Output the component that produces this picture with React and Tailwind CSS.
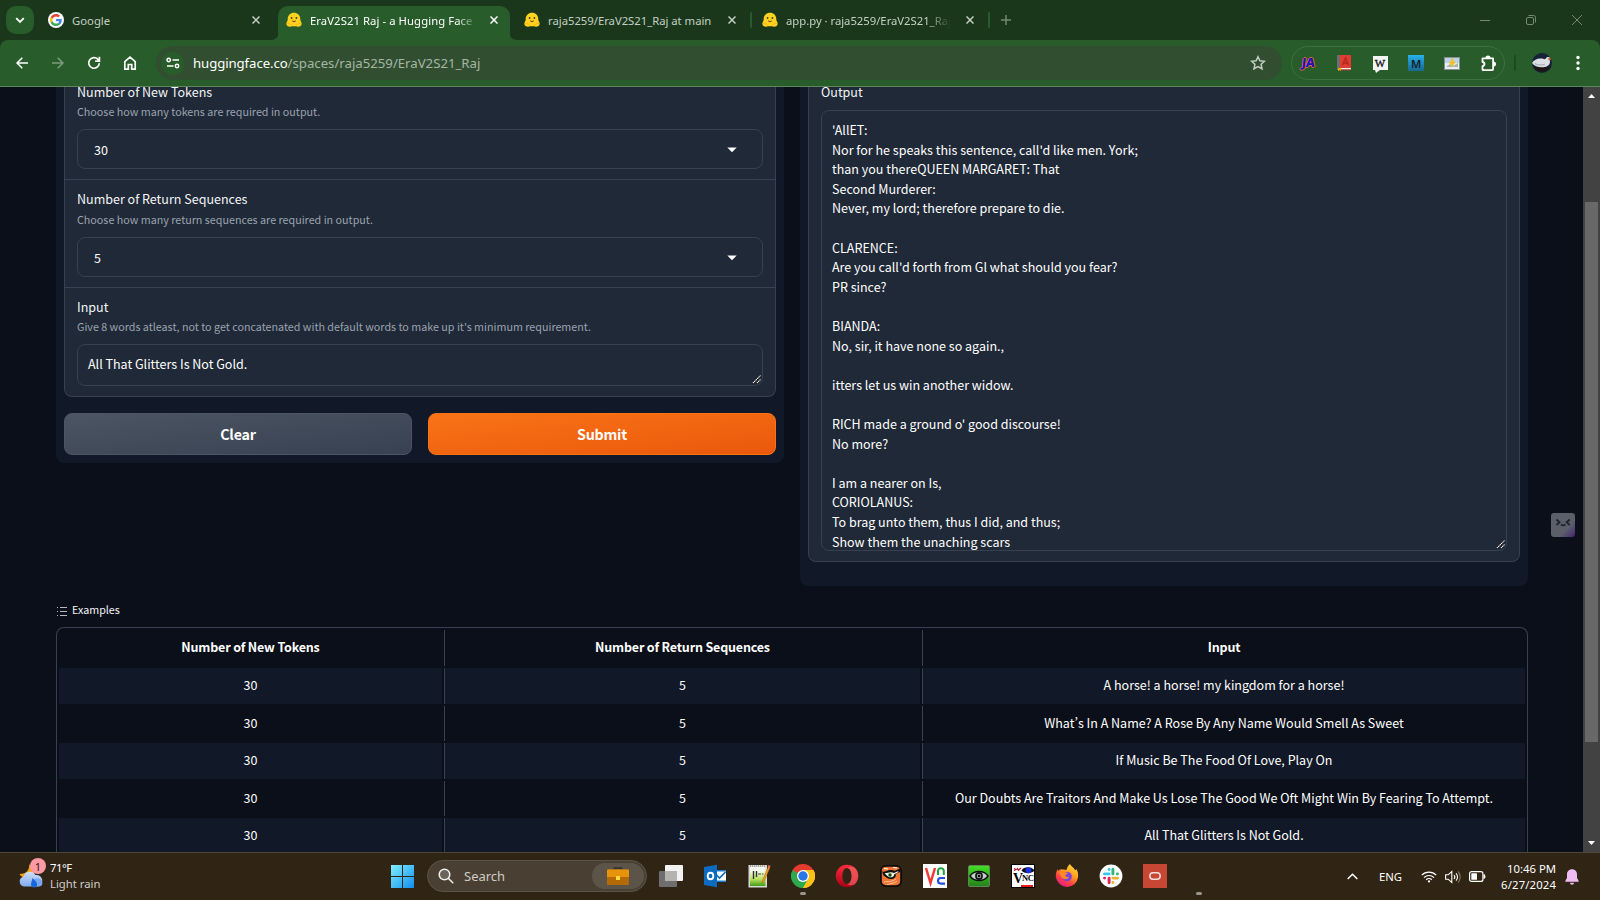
const OUTPUT = `'AllET:
Nor for he speaks this sentence, call'd like men. York;
than you thereQUEEN MARGARET: That
Second Murderer:
Never, my lord; therefore prepare to die.

CLARENCE:
Are you call'd forth from Gl what should you fear?
PR since?

BIANDA:
No, sir, it have none so again.,

itters let us win another widow.

RICH made a ground o' good discourse!
No more?

I am a nearer on Is,
CORIOLANUS:
To brag unto them, thus I did, and thus;
Show them the unaching scars`;

const EXAMPLES = [
  'A horse! a horse! my kingdom for a horse!',
  'What’s In A Name? A Rose By Any Name Would Smell As Sweet',
  'If Music Be The Food Of Love, Play On',
  'Our Doubts Are Traitors And Make Us Lose The Good We Oft Might Win By Fearing To Attempt.',
  'All That Glitters Is Not Gold.',
];

/* ---------- browser chrome ---------- */

function HuggingFace() {
  return (
    <svg width="16" height="16" viewBox="0 0 16 16" className="shrink-0">
      <path d="M8 .8c3.600 0 6.300 2.700 6.300 6.200 0 1.200.2 2 .9 3 .7 1 .7 3-.6 4-1.300 1-3.600 1-4.600.3H6c-1 .7-3.300.7-4.600-.3-1.300-1-1.300-3-.6-4 .7-1 .9-1.800.9-3C1.700 3.500 4.400.8 8 .8z" fill="#ffd21e" />
      <path d="M1 12c1.500-1 3.500-.6 4.600 1.600M15 12c-1.500-1-3.500-.6-4.600 1.600" stroke="#ffb01e" strokeWidth="1" fill="none" />
      <circle cx="5.600" cy="6" r=".9" fill="#3a3b45" />
      <circle cx="10.400" cy="6" r=".9" fill="#3a3b45" />
      <path d="M5.900 8.300c1.200.8 3 .8 4.200 0-.2 1.200-1 1.900-2.100 1.900s-1.900-.7-2.100-1.900z" fill="#7a4a2a" />
    </svg>
  );
}

function GoogleG() {
  return (
    <svg width="16" height="16" viewBox="0 0 48 48" className="shrink-0">
      <circle cx="24" cy="24" r="24" fill="#fff" />
      <g transform="translate(6 6) scale(.75)">
        <path fill="#EA4335" d="M24 9.500c3.540 0 6.710 1.220 9.210 3.600l6.850-6.850C35.900 2.380 30.470 0 24 0 14.620 0 6.510 5.380 2.560 13.220l7.980 6.190C12.430 13.720 17.740 9.500 24 9.500z" />
        <path fill="#4285F4" d="M46.980 24.550c0-1.570-.15-3.090-.38-4.550H24v9.020h12.940c-.58 2.960-2.260 5.480-4.780 7.180l7.730 6c4.510-4.180 7.090-10.360 7.090-17.650z" />
        <path fill="#FBBC05" d="M10.530 28.590c-.48-1.450-.76-2.990-.76-4.590s.27-3.140.76-4.590l-7.980-6.190C.92 16.460 0 20.120 0 24c0 3.880.92 7.540 2.560 10.780l7.970-6.190z" />
        <path fill="#34A853" d="M24 48c6.480 0 11.930-2.130 15.890-5.810l-7.730-6c-2.150 1.450-4.920 2.300-8.160 2.300-6.260 0-11.570-4.220-13.470-9.910l-7.980 6.190C6.510 42.620 14.620 48 24 48z" />
      </g>
    </svg>
  );
}

function TabClose({ active }) {
  return (
    <svg width="8" height="8" viewBox="0 0 8 8" className="shrink-0">
      <path d="M.5.5l7 7M7.500.5l-7 7" stroke={active ? '#fff' : '#c3cfc3'} strokeWidth="1.500" fill="none" />
    </svg>
  );
}

function TabStrip() {
  return (
    <div className="flex h-10 bg-[#1b371b] text-[11.3px] leading-[16px] text-[#c3cfc3]">
      <div className="mt-1.5 ml-1.5 flex size-7 shrink-0 items-center justify-center rounded-[10px] bg-[#285c2a]">
        <svg width="10" height="7" viewBox="0 0 10 7"><path d="M1.200 1.200L5 5l3.800-3.800" stroke="#fff" strokeWidth="1.800" fill="none" /></svg>
      </div>
      <div className="flex w-[237px] shrink-0 items-center pr-[11px] pl-[14px]">
        <GoogleG />
        <span className="ml-2 grow pt-[2px]">Google</span>
        <TabClose />
      </div>
      <svg width="8" height="40" viewBox="0 0 8 40" className="-mr-px shrink-0"><path d="M0 40a8 8 0 0 0 8-8v8z" fill="#285c2a" /></svg>
      <div className="mt-1.5 flex w-[232px] shrink-0 items-center rounded-t-[10px] bg-[#285c2a] pr-[12px] pb-1.5 pl-[8px] text-white">
        <HuggingFace />
        <div className="ml-2 w-[167px] shrink-0 overflow-hidden pt-[2px] whitespace-nowrap tracking-[0.07px] [mask-image:linear-gradient(to_right,black_88%,transparent)]">EraV2S21 Raj - a Hugging Face S</div>
        <div className="grow" />
        <TabClose active />
      </div>
      <svg width="8" height="40" viewBox="0 0 8 40" className="-ml-px shrink-0"><path d="M8 40a8 8 0 0 1-8-8v8z" fill="#285c2a" /></svg>
      <div className="flex w-[233px] shrink-0 items-center pl-[7px]">
        <HuggingFace />
        <span className="ml-2 w-[180px] pt-[2px] whitespace-nowrap tracking-[-0.02px]">raja5259/EraV2S21_Raj at main</span>
        <TabClose />
      </div>
      <div className="mt-3 h-4 w-[2px] shrink-0 rounded bg-[#285c2a]" />
      <div className="flex w-[236px] shrink-0 items-center pl-[10px]">
        <HuggingFace />
        <div className="mr-[15px] ml-2 w-[165px] shrink-0 overflow-hidden pt-[2px] whitespace-nowrap tracking-[-0.02px] [mask-image:linear-gradient(to_right,black_85%,transparent)]">app.py · raja5259/EraV2S21_Raj</div>
        <TabClose />
      </div>
      <div className="mt-3 h-4 w-[2px] shrink-0 rounded bg-[#285c2a]" />
      <svg width="10" height="10" viewBox="0 0 10 10" className="mt-[15px] ml-[11px] shrink-0"><path d="M5 0v10M0 5h10" stroke="#73896f" strokeWidth="1.500" /></svg>
      <div className="grow" />
      <div className="mr-[18px] flex items-center gap-[36px] text-[#748a74]">
        <svg width="10" height="10" viewBox="0 0 10 10"><path d="M0 5.500h10" stroke="currentColor" /></svg>
        <svg width="10" height="10" viewBox="0 0 10 10" fill="none" stroke="currentColor"><rect x=".5" y="2.500" width="7" height="7" rx="1.500" /><path d="M2.500.5h5a2 2 0 0 1 2 2v5" /></svg>
        <svg width="10" height="10" viewBox="0 0 10 10"><path d="M0 0l10 10M10 0L0 10" stroke="currentColor" /></svg>
      </div>
    </div>
  );
}

function Slot({ children, w = 'w-9' }) {
  return <div className={`flex shrink-0 items-center justify-center ${w}`}>{children}</div>;
}

function Toolbar() {
  return (
    <div className="bg-[#1b371b]">
      <div className="flex h-[47px] items-center rounded-t-lg border-b border-[#5b875d] bg-[#285c2a] pl-1 text-white">
        <Slot><svg width="12" height="12" viewBox="0 0 12 12" fill="none" stroke="currentColor" strokeWidth="1.600"><path d="M12 6H1.200M6.300.8L1.100 6l5.200 5.200" /></svg></Slot>
        <Slot><svg width="12" height="12" viewBox="0 0 12 12" fill="none" stroke="#7c9b7c" strokeWidth="1.600"><path d="M0 6h10.800M5.700.8L10.900 6l-5.200 5.200" /></svg></Slot>
        <Slot><svg width="14" height="14" viewBox="0 0 14 14" fill="none" stroke="currentColor" strokeWidth="1.700"><path d="M12.300 7.300A5.300 5.300 0 1 1 10.800 3.200L12 4.500" /><path d="M12.400.8v4.300H8.200" /></svg></Slot>
        <Slot><svg width="14" height="14" viewBox="0 0 14 14" fill="none" stroke="currentColor" strokeWidth="1.700"><path d="M1.800 5.600L7 1.200l5.200 4.400v7.500H8.700V8.500H5.300v4.600H1.800z" /></svg></Slot>
        <div className="ml-2 flex h-[34px] w-[1126px] items-center rounded-full bg-[#314e31] pr-[16px] pl-[5px]">
          <div className="flex size-[23px] items-center justify-center rounded-full bg-[#285c2a]">
            <svg width="14" height="12" viewBox="0 0 14 12" fill="none" stroke="currentColor" strokeWidth="1.500"><circle cx="2.700" cy="3" r="1.700" /><path d="M6.500 3H13M1 9h6.500" /><circle cx="11" cy="9" r="1.700" /></svg>
          </div>
          <div className="ml-[9px] grow whitespace-nowrap text-[13.2px] leading-5 text-[#a6b5a4]"><span className="tracking-[-0.08px] text-white">huggingface.co</span><span>/spaces/raja5259/EraV2S21_Raj</span></div>
          <svg width="16" height="16" viewBox="0 0 16 16" fill="none" stroke="#c4cfc2" strokeWidth="1.500"><path d="M8 1.800l1.900 4 4.500.5-3.300 3 .9 4.400L8 11.500l-4 2.200.9-4.400-3.300-3 4.500-.5z" /></svg>
        </div>
        <div className="ml-[9px] flex h-[34px] w-[214px] items-center rounded-full border border-[#3f703f]">
          <Slot w="w-[34px]"><span className="mr-[2px] -skew-x-6 font-['Noto_Sans'] text-[12.5px] font-extrabold tracking-[-0.5px] text-[#1a12c8] [text-shadow:1px_0_#d8642e,-1px_0_#d8642e,0_1px_#d8642e,0_-1px_#d8642e]">JA</span></Slot>
          <Slot>
            <svg width="14" height="16" viewBox="0 0 14 16"><path d="M0 0h3v15H0z" fill="#6e6e6e" /><path d="M3 0h11v13H3z" fill="#e03c31" /><path d="M3 13h11v1.500H3z" fill="#eee" /><path d="M3 14.500h11v.8H3z" fill="#d33" /><path d="M1 13h3v3l-1.500-1L1 16z" fill="#f2a900" /><path d="M5.500 10L8.500 3l3 7M6.500 8h4" stroke="#b32820" strokeWidth="1.400" fill="none" /></svg>
          </Slot>
          <Slot>
            <div className="relative flex h-[14px] w-[15px] items-center justify-center bg-[#f4f4f4] font-['Liberation_Serif'] text-[11px] leading-none text-[#111] [-webkit-text-stroke:0.3px_#111]">W
              <svg width="5" height="3" viewBox="0 0 5 3" className="absolute top-[14px] left-[2px]"><path d="M0 0h5L1 3z" fill="#f4f4f4" /></svg>
            </div>
          </Slot>
          <Slot><div className="flex size-4 items-center justify-center bg-linear-to-b from-[#29b1ec] to-[#17688f] text-[11px] leading-none font-semibold text-[#10202c]">M</div></Slot>
          <Slot>
            <svg width="16" height="13" viewBox="0 0 16 13"><rect width="16" height="13" fill="#8b8f92" /><rect x="1" y="1" width="14" height="11" fill="#e9eef2" /><path d="M1 1h14v5H1z" fill="#b8d4ec" /><path d="M2 10l4-3 3 2 5-3v4z" fill="#a8b6a0" /><path d="M7 1.500h2.500v3.300H12L8.200 9.800 4.500 4.800H7z" fill="#f7bf26" /></svg>
          </Slot>
          <Slot>
            <svg width="17" height="17" viewBox="0 0 17 17" fill="none" stroke="#fff" strokeWidth="1.800" strokeLinejoin="round"><path d="M2.500 3.400h10.600v10.900c0 .6-.3.900-.8.900H3.300c-.5 0-.8-.3-.8-.8v-3.200c2.600-.3 2.600-3.900 0-4.200z" /><path d="M6.300 3.100a1.700 1.700 0 0 1 3.400 0M13.300 7.400a1.700 1.700 0 0 1 0 3.600" fill="#fff" /></svg>
          </Slot>
        </div>
        <div className="ml-[9px] h-4 w-[2px] rounded bg-[#1b4a1e]" />
        <svg width="20" height="20" viewBox="0 0 20 20" className="ml-[16px]">
          <circle cx="10" cy="10" r="10" fill="#152238" />
          <path d="M1.500 14h17a10 10 0 0 1-17 0z" fill="#1c1714" />
          <path d="M0 10c2-3.500 6-5 9-4.500 2 0 3 1 4.500.5 1-2 3-2.500 4.500-1.200.5.8-.3 1-.3 2.200 1 3-.7 6.500-5 7C8 15 3 14 0 10z" fill="#dcdfe4" />
          <path d="M3 10.500c3 2 7 2 10 .5" stroke="#9fa5b0" fill="none" />
          <circle cx="17.500" cy="6" r="1.300" fill="#d9622b" />
        </svg>
        <svg width="4" height="16" viewBox="0 0 4 16" className="ml-[24px]" fill="#fff"><circle cx="2" cy="2.500" r="1.700" /><circle cx="2" cy="8" r="1.700" /><circle cx="2" cy="13.500" r="1.700" /></svg>
      </div>
    </div>
  );
}

/* ---------- page ---------- */

function Grip() {
  return (
    <svg width="9" height="9" viewBox="0 0 9 9" className="absolute right-[1px] bottom-[1px]">
      <path d="M.5 8.500l8-8M4.500 8.500l4-4" stroke="#000" strokeWidth="1.800" />
      <path d="M.8 8.200l7.700-7.700M4.800 8.200l3.700-3.700" stroke="#fff" strokeWidth="1.100" strokeDasharray="1.600 .4" />
    </svg>
  );
}

function Label({ children }) {
  return <div className="h-5 text-[12.52px] leading-5 text-[#f3f4f6]">{children}</div>;
}

function Info({ children }) {
  return <div className="h-[18px] text-[10.74px] leading-[18px] whitespace-nowrap text-[#9ca3af]">{children}</div>;
}

function Select({ value }) {
  return (
    <div className="mt-2 flex h-10 items-center justify-between rounded-lg border border-[#374151] pt-px pr-[25px] pl-4 text-[12.52px] leading-5 text-white">
      <span>{value}</span>
      <svg width="10" height="6" viewBox="0 0 10 6"><path d="M.3.500h9.400L5 5.300z" fill="#fff" /></svg>
    </div>
  );
}

function InputPanel() {
  return (
    <section className="h-[376px] w-[728px] rounded-b-lg bg-[#111827] px-2">
      <div className="flow-root h-[310px] rounded-b-lg border border-t-0 border-[#374151] bg-[#1f2937]">
        <div className="flow-root h-[93px] border-b border-[#374151] px-3">
          <div className="-mt-[5px] mb-px"><Label>Number of New Tokens</Label></div>
          <Info>Choose how many tokens are required in output.</Info>
          <Select value="30" />
        </div>
        <div className="h-[108px] border-b border-[#374151] px-3 pt-[9px]">
          <div className="mb-[2px]"><Label>Number of Return Sequences</Label></div>
          <Info>Choose how many return sequences are required in output.</Info>
          <Select value="5" />
        </div>
        <div className="px-3 pt-[9px]">
          <div className="mb-px"><Label>Input</Label></div>
          <Info>Give 8 words atleast, not to get concatenated with default words to make up it's minimum requirement.</Info>
          <div className="relative mt-2 h-[42px] rounded-lg border border-[#374151] px-[10px] pt-[9px] text-[12.52px] leading-[20px] text-white">
            All That Glitters Is Not Gold.
            <Grip />
          </div>
        </div>
      </div>
      <div className="mt-4 grid h-[42px] grid-cols-2 gap-4 text-center text-[14.3px] leading-[40px] font-bold tracking-[-0.2px] text-white">
        <button className="rounded-lg border border-[#4b5563] bg-linear-to-br from-[#4b5563] to-[#374151]">Clear</button>
        <button className="rounded-lg border border-[#f97316] bg-linear-to-br from-[#f97316] to-[#ea580c]">Submit</button>
      </div>
    </section>
  );
}

function OutputPanel() {
  return (
    <section className="h-[499px] w-[728px] rounded-b-lg bg-[#111827] px-2">
      <div className="flow-root h-[475px] rounded-b-lg border border-t-0 border-[#374151] bg-[#1f2937] px-3">
        <div className="-mt-[5px]"><Label>Output</Label></div>
        <div className="relative mt-[8px] h-[441px] overflow-hidden rounded-lg border border-[#374151] px-[10px] pt-[9.1px] text-[12.52px] leading-[19.6px] whitespace-pre text-white">
          {OUTPUT}
          <Grip />
        </div>
      </div>
    </section>
  );
}

function Examples() {
  return (
    <section className="ml-14 w-[1472px] [font-feature-settings:'pwid']">
      <div className="mt-[14px] flex h-5 items-center text-[10.72px] leading-5 text-[#f3f4f6]">
        <svg width="10" height="9" viewBox="0 0 10 9" className="mx-px mr-[5px] mt-[2px]" fill="#b4b8bf"><path d="M0 0h1v1H0zM3 0h7v1H3zM0 4h1v1H0zM3 4h7v1H3zM0 8h1v1H0zM3 8h7v1H3z" /></svg>
        Examples
      </div>
      <div className="mt-[7px] rounded-t-lg border border-b-0 border-[#374151] px-[2px] pt-[2px] text-center text-[12.52px] text-white">
        <div className="grid h-9 grid-cols-[383px_476px_1fr] gap-[2px] leading-[34px] font-bold tracking-[-0.18px]">
          <div>Number of New Tokens</div>
          <div className="border-l border-[#374151]">Number of Return Sequences</div>
          <div className="border-l border-[#374151]">Input</div>
        </div>
        {EXAMPLES.map((text, i) => (
          <div key={text} className={`mt-[2px] mb-[1.6px] grid h-[35.600px] grid-cols-[383px_476px_1fr] gap-[2px] leading-[34px] ${i % 2 ? '' : '[&>div]:bg-[#111827]'}`}>
            <div>30</div>
            <div className="border-l border-[#374151]">5</div>
            <div className="border-l border-[#374151]">{text}</div>
          </div>
        ))}
      </div>
    </section>
  );
}

function Page() {
  return (
    <main className="flex h-[765px] overflow-hidden bg-[#0b0f19] font-['Noto_Sans_CJK_SC',sans-serif]">
      <div className="relative w-[1583px] overflow-hidden">
        <div className="flex items-start gap-4 pl-14">
          <InputPanel />
          <OutputPanel />
        </div>
        <Examples />
        <div className="absolute top-[426px] left-[1551px] size-6 rounded-[3px] bg-linear-to-br from-[#5c5f6a] from-65% to-[#452070]">
          <svg width="24" height="24" viewBox="0 0 24 24" fill="none" stroke="#1c2230" strokeWidth="1.800"><path d="M5.500 6.500L8.500 9.300l-3 2.700M18.700 6.500l-3 2.800 3 2.700M10 11.500q2.200 1.800 4.400 0" /></svg>
        </div>
      </div>
      <div className="flex w-[17px] flex-col items-center bg-[#424242]">
        <svg width="7" height="4" viewBox="0 0 7 4" className="mt-[7px]"><path d="M0 4h7L3.500 0z" fill="#fff" /></svg>
        <div className="mt-[104px] h-[540px] w-[13px] bg-[#686868]" />
        <div className="grow" />
        <svg width="7" height="4" viewBox="0 0 7 4" className="mb-[7px]"><path d="M0 0h7L3.500 4z" fill="#fff" /></svg>
      </div>
    </main>
  );
}

/* ---------- taskbar ---------- */

function Outlook() {
  return (
    <svg width="24" height="24" viewBox="0 0 24 24"><rect x="10" y="6" width="13" height="12" fill="#1a7fd4" /><path d="M12 7.500h11v9H12z" fill="#fff" /><path d="M13.500 11l3 3 6-6" stroke="#0f6cbd" strokeWidth="1.700" fill="none" /><path d="M1 3L14 .8v22.400L1 21z" fill="#0c6cc0" /><ellipse cx="7.500" cy="12" rx="2.800" ry="3.300" stroke="#fff" strokeWidth="1.900" fill="none" /></svg>
  );
}

function Notepad() {
  return (
    <svg width="24" height="24" viewBox="0 0 24 24">
      <defs><linearGradient id="npg" x1="0" y1="0" x2="0" y2="1"><stop offset=".2" stopColor="#f5f8ee" /><stop offset=".65" stopColor="#b6e05a" /><stop offset="1" stopColor="#3f9e1a" /></linearGradient></defs>
      <rect x="1.500" y="1" width="18.500" height="22.500" fill="#d9d9d4" /><rect x="3" y="3" width="15.500" height="19" fill="url(#npg)" />
      <path d="M3 2h15" stroke="#777" strokeDasharray="1 1" /><path d="M6.500 7v8M9.500 7v6" stroke="#333" strokeWidth="1.400" /><path d="M11 10h3M15 10h1.500" stroke="#444" strokeWidth="1.200" />
      <path d="M21.500 2l-6 14.500-.8 3 2.300-2L23 3.500z" fill="#f0a31c" stroke="#a05a10" strokeWidth=".5" /><path d="M21 1l2.500.8-.6 1.900-2.300-.8z" fill="#d66" />
    </svg>
  );
}

function Chrome() {
  return (
    <svg width="24" height="24" viewBox="0 0 24 24">
      <path d="M12 12L1.600 6A12 12 0 0 1 22.400 6z" fill="#e33b2e" /><path d="M12 12L22.400 6A12 12 0 0 1 12 24z" fill="#fbc116" /><path d="M12 12L12 24A12 12 0 0 1 1.600 6z" fill="#2da94f" />
      <path d="M12 6h10.400L17.200 15z" fill="#fbc116" /><path d="M6.800 15L1.600 6 12 6z" fill="#e33b2e" /><path d="M1.600 6l5.200 9L12 12z" fill="#2da94f" /><path d="M17.200 15L12 24l-3-8z" fill="#2da94f" /><path d="M17.200 15L12 24h0A12 12 0 0 0 22.400 6H12z" fill="#fbc116" />
      <circle cx="12" cy="12" r="6" fill="#fff" /><circle cx="12" cy="12" r="4.700" fill="#2a75e8" />
    </svg>
  );
}

function Opera() {
  return (
    <svg width="24" height="24" viewBox="0 0 24 24">
      <defs><linearGradient id="opg" x1="0" y1="0" x2="0" y2="1"><stop offset="0" stopColor="#ff2b3c" /><stop offset="1" stopColor="#a80016" /></linearGradient></defs>
      <path fillRule="evenodd" d="M12 .8a11.200 11.200 0 1 1 0 22.400 11.200 11.200 0 0 1 0-22.400zm0 3.200c-2.600 0-4.600 3.500-4.600 8s2 8 4.600 8 4.600-3.500 4.600-8-2-8-4.600-8z" fill="url(#opg)" />
      <path d="M12 4c2-1.600 5-1.500 7.500-.4a11.200 11.200 0 0 1 0 16.800c-2.500 1.100-5.500 1.200-7.500-.4 2.600 0 4.600-3.500 4.600-8s-2-8-4.600-8z" fill="#f46a6a" opacity=".65" />
    </svg>
  );
}

function TigerEye() {
  return (
    <svg width="22" height="22" viewBox="0 0 22 22">
      <rect x=".9" y=".9" width="20.200" height="20.200" rx="5" fill="#ee7433" stroke="#0a0a0a" strokeWidth="1.800" />
      <path d="M2 6.500c2 .5 4-.5 6-1 3-1 5 0 7 .3l5-2.300v3.500l-4.500 2c1.500 2.800-2 5.500-5.500 5-3-.3-4.500-2.500-6.500-3.500z" fill="#111" />
      <path d="M4.500 8.300c3 .2 5.500-2 9.500-.4l4.500-1.800-.7 1.500-3.600 1.600c.3 2-2.200 3.600-4.700 3-2.300-.4-3-2.400-5-3.900z" fill="#f6f3ea" />
      <circle cx="10" cy="10" r="2" fill="#4a9b3c" /><circle cx="10" cy="10" r=".9" fill="#111" />
      <path d="M4 3.500l4 .5M13 2.500l4 .5" stroke="#fff" strokeWidth="1" fill="none" />
      <path d="M4 17c4-1 7 .5 12-3M7 19.500c4-1 6-1 10-3" stroke="#f7c49c" strokeWidth="1" fill="none" />
    </svg>
  );
}

function VncServer() {
  return (
    <svg width="24" height="24" viewBox="0 0 24 24"><rect width="24" height="24" fill="#fff" /><path d="M3 4l4.500 15L12 4" stroke="#ef3a3a" strokeWidth="2.500" fill="none" /><path d="M15 11V6.500a3 3 0 0 1 5.800 0V11" stroke="#19a33a" strokeWidth="2" fill="none" /><path d="M22 14h-4.200a2.800 2.800 0 0 0 0 5.600H22" stroke="#1f4fe0" strokeWidth="2.100" fill="none" /></svg>
  );
}

function GreenEye() {
  return (
    <svg width="22" height="22" viewBox="0 0 22 22">
      <defs><linearGradient id="geg" x1="0" y1="0" x2="0" y2="1"><stop offset="0" stopColor="#49dc2c" /><stop offset=".5" stopColor="#27b814" /><stop offset="1" stopColor="#2a7d20" /></linearGradient></defs>
      <rect x=".5" y=".5" width="21" height="21" rx="1.500" fill="url(#geg)" stroke="#5b8a50" />
      <path d="M2 11c4-6 14-6 18 0-4 6-14 6-18 0z" fill="#c8d0c8" stroke="#111" strokeWidth="1.400" /><circle cx="11" cy="11" r="3.900" fill="#111" /><circle cx="11" cy="11" r="2.300" fill="#9aa" /><circle cx="11" cy="11" r="1.300" fill="#000" />
    </svg>
  );
}

function VncViewer() {
  return (
    <div className="flex size-6 flex-col border border-black bg-white font-['Liberation_Serif'] leading-none font-bold text-black">
      <svg width="22" height="9" viewBox="0 0 22 9"><path d="M2 3.500l2 1-2 1M5 3l2 3M6 5.500L9 3" stroke="#b01828" strokeWidth="1.300" fill="none" /><path d="M9.500 5.500c2-4 10-4.500 13 0-3 3.500-10 3.500-13 0z" fill="#111" /><circle cx="16.500" cy="5.300" r="3" fill="#1830e8" /></svg>
      <div className="flex h-[10px] items-start pl-px"><span className="w-[9px] text-[14px] leading-[10px] tracking-[-1px]">V</span><span className="text-[8.5px] leading-[9px] tracking-[-0.5px]">NC</span></div>
      <div className="mt-px ml-[9px] h-[2px] w-3 bg-[#e81818]" />
    </div>
  );
}

function Firefox() {
  return (
    <svg width="24" height="24" viewBox="0 0 24 24">
      <defs>
        <linearGradient id="ffg" x1=".8" y1="0" x2=".2" y2="1"><stop offset="0" stopColor="#ffe03a" /><stop offset=".4" stopColor="#ff9a1f" /><stop offset=".7" stopColor="#ff3f47" /><stop offset="1" stopColor="#d9158f" /></linearGradient>
      </defs>
      <path d="M15 0c1 2.500 4 3.500 5.200 6.200.9-.1 1-.7 1-1.400 1.600 2.500 2.200 5.200 1.900 8.200A11.200 11.200 0 0 1 .8 12.500C.7 9.500 1.500 7 3 5v2.200C4 6 5.800 5 7.500 5.500c1.500-.4 3 .3 4 .5C12 3.500 13 1.500 15 0z" fill="url(#ffg)" />
      <circle cx="12" cy="12.500" r="4.800" fill="#7a44d8" />
      <path d="M5 8c2-1.500 4-1 5 .2 1 .3 2.500.1 3 .8-.5 1.500-2.500 1.200-2.700 2.700.5 1.200 2 1.600 3.700 1.300-1 2.500-5.500 3-7.500 0C5.300 11.500 5 10 5 8z" fill="#ff8a25" />
    </svg>
  );
}

function Slack() {
  return (
    <svg width="24" height="24" viewBox="0 0 24 24">
      <circle cx="12" cy="12" r="11.400" fill="#fff" />
      <g strokeWidth="2.900" strokeLinecap="round">
        <path d="M10.100 5.500v.1M5.500 9.900h4.600" stroke="#36c5f0" /><path d="M18.500 9.900h-.1M13.900 5.300v4.600" stroke="#2eb67d" /><path d="M10.100 14.100v4.600M5.500 14.100h.1" stroke="#e01e5a" /><path d="M13.900 14.100h4.600M13.900 18.500v.1" stroke="#ecb22e" />
      </g>
    </svg>
  );
}

function AppSlot({ children, running }) {
  return (
    <div className="flex h-[47px] w-11 shrink-0 flex-col items-center">
      <div className="mt-[11px] flex h-6 items-center">{children}</div>
      {running && <div className="mt-[4px] h-[3px] w-[6px] rounded-full bg-[#9a948b]" />}
    </div>
  );
}

function Taskbar() {
  return (
    <footer className="flex h-12 border-t border-[#50463a] bg-[#302415] text-[11.3px] leading-4 text-white">
      <div className="flex w-[380px] pl-[18px]">
        <div className="relative mt-[6px] h-8 w-7">
          <svg width="28" height="32" viewBox="0 0 28 32">
            <defs><linearGradient id="cld" x1="0" y1="0" x2="0" y2="1"><stop offset="0" stopColor="#cfe0fb" /><stop offset="1" stopColor="#7fa9ee" /></linearGradient></defs>
            <path d="M11 5c1 5-2 10-9.500 10 2 4 7 5 11 3l5-5z" fill="#f3a11d" />
            <path d="M6 27.500a5 5 0 0 1-.5-9.800 6.500 6.500 0 0 1 12-1.700 5.500 5.500 0 0 1 2 11.500z" fill="url(#cld)" />
            <path d="M14 27.500c0-6 3-8.500 6-8 4 .5 5 4 4 6.500-1 1.500-2.500 1.500-4 1.500z" fill="#7aa8f0" /><path d="M14.500 19c3 2.500 6 6 4 8.500-2 1.800-5.500.8-5.500-2.200 0-2 1-3.300 1.500-6.300z" fill="#1767dc" />
          </svg>
          <div className="absolute -top-px left-[12px] flex size-4 items-center justify-center rounded-full bg-[#ff99a4] text-[11px] leading-none text-[#2b1518]">1</div>
        </div>
        <div className="mt-[7px] ml-[4px]">
          <div className="tracking-[-0.5px]">71°F</div>
          <div className="text-[#d0cdc8]">Light rain</div>
        </div>
      </div>
      <AppSlot>
        <svg width="23" height="23" viewBox="0 0 23 23">
          <defs><linearGradient id="wing" x1="0" y1="0" x2="1" y2="1"><stop offset="0" stopColor="#7ff0ff" /><stop offset="1" stopColor="#0f8df0" /></linearGradient></defs>
          <path d="M0 0h11v11H0zM12 0h11v11H12zM0 12h11v11H0zM12 12h11v11H12z" fill="url(#wing)" />
        </svg>
      </AppSlot>
      <div className="mt-[7px] ml-[3px] flex h-8 w-[220px] items-center rounded-full border border-[#5d5345] bg-[#494033] pr-[2px] pl-[10px]">
        <svg width="16" height="16" viewBox="0 0 16 16" fill="#6b6459" stroke="#f2f0ee" strokeWidth="1.500"><circle cx="6.500" cy="6.500" r="5.300" /><path d="M10.500 10.500l4.300 4.300" strokeLinecap="round" /></svg>
        <span className="ml-[10px] grow text-[13px] leading-5 text-[#cfcbc5]">Search</span>
        <div className="flex h-[26px] w-[52px] items-center justify-center rounded-full bg-[#5c5448]">
          <svg width="22" height="18" viewBox="0 0 22 18"><path d="M7.500 3V1.200h7V3" stroke="#333" strokeWidth="1.800" fill="none" /><rect y="2.500" width="22" height="15.500" rx="1" fill="#b36a08" /><path d="M0 3.500a1 1 0 0 1 1-1h20a1 1 0 0 1 1 1V10H0z" fill="#e8930c" /><rect x="9" y="9" width="4" height="4" fill="#ffd83a" /></svg>
        </div>
      </div>
      <div className="ml-[2px] flex">
        <AppSlot><svg width="24" height="22" viewBox="0 0 24 22"><rect x="6" y="0" width="18" height="16" rx="1" fill="#f2f2f2" /><rect x="0" y="6" width="18" height="16" rx="1" fill="#6e6e6e" /><path d="M6 6h12v10H6z" fill="#b5b3b0" /></svg></AppSlot>
        <AppSlot><Outlook /></AppSlot>
        <AppSlot><Notepad /></AppSlot>
        <AppSlot running><Chrome /></AppSlot>
        <AppSlot><Opera /></AppSlot>
        <AppSlot><TigerEye /></AppSlot>
        <AppSlot><VncServer /></AppSlot>
        <AppSlot><GreenEye /></AppSlot>
        <AppSlot><VncViewer /></AppSlot>
        <AppSlot><Firefox /></AppSlot>
        <AppSlot><Slack /></AppSlot>
        <AppSlot><svg width="24" height="24" viewBox="0 0 24 24"><rect width="24" height="24" fill="#c74634" /><rect x="6.800" y="8.800" width="10.400" height="6.400" rx="3.200" fill="none" stroke="#f4dcd8" strokeWidth="1.500" /></svg></AppSlot>
        <AppSlot running />
      </div>
      <div className="grow" />
      <div className="flex items-center">
        <svg width="11" height="7" viewBox="0 0 11 7"><path d="M.7 6L5.500 1.200 10.300 6" stroke="#fff" strokeWidth="1.500" fill="none" /></svg>
        <span className="ml-[21px] w-[23px] pt-px">ENG</span>
        <svg width="16" height="13" viewBox="0 0 16 13" className="ml-[19px]" fill="none" stroke="#fff" strokeWidth="1.200"><path d="M.8 5.200a10 10 0 0 1 14.400 0M3 7.600a7 7 0 0 1 10 0M5.200 9.800a4 4 0 0 1 5.600 0" /><circle cx="8" cy="11.400" r="1.100" fill="#fff" stroke="none" /></svg>
        <svg width="17" height="14" viewBox="0 0 17 14" className="ml-[8px]" fill="none" stroke="#fff" strokeWidth="1.100"><path d="M.6 4.800h2.600L6.800 1.500v11L3.200 9.200H.6z" /><path d="M9 5a3 3 0 0 1 0 4M11 3.300a5.300 5.300 0 0 1 0 7.400" /><path d="M13 1.500a8 8 0 0 1 0 11" stroke="#7d7569" /></svg>
        <svg width="17" height="11" viewBox="0 0 17 11" className="ml-[7px]"><rect x=".6" y=".6" width="13.300" height="9.800" rx="2" fill="none" stroke="#fff" strokeWidth="1.200" /><rect x="2.300" y="2.300" width="5.700" height="6.400" rx=".5" fill="#fff" /><path d="M15 3.500c1.300.3 1.300 3.700 0 4z" fill="#fff" stroke="#fff" /></svg>
        <div className="ml-[12px] w-[58px] text-right">
          <div>10:46 PM</div>
          <div className="tracking-[0.14px]">6/27/2024</div>
        </div>
        <svg width="14" height="16" viewBox="0 0 14 16" className="mr-[21px] ml-[9px]"><path d="M7 .3c3 0 5 2.200 5 5v3.500l1.700 3.200v.7H.3V12L2 8.800V5.300C2 2.500 4 .3 7 .3z" fill="#eebbf2" /><path d="M5 13.800h4a2 2 0 0 1-4 0z" fill="#eebbf2" /></svg>
      </div>
    </footer>
  );
}

export default function App() {
  return (
    <div className="h-[900px] w-[1600px] overflow-hidden font-['Noto_Sans','Open_Sans',sans-serif]">
      <TabStrip />
      <Toolbar />
      <Page />
      <Taskbar />
    </div>
  );
}
